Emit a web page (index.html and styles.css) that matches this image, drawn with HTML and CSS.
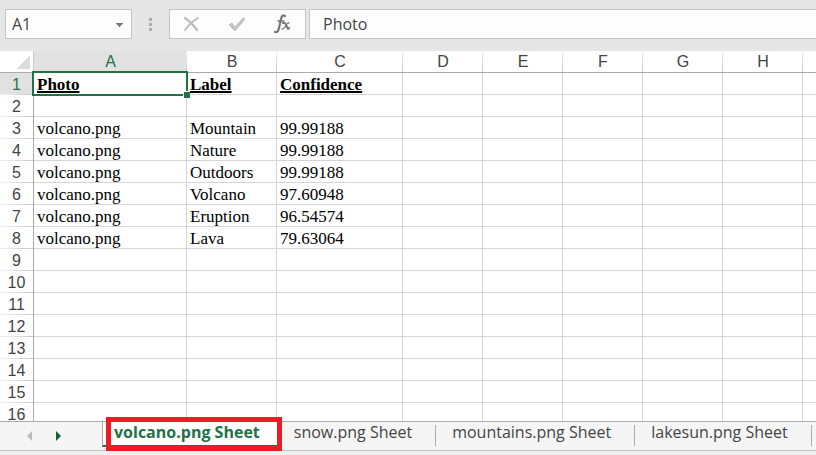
FILE: index.html
```html
<!DOCTYPE html>
<html lang="en">
<head>
<meta charset="utf-8">
<title>Photo labels</title>
<link rel="stylesheet" href="styles.css">
</head>
<body>
<header class="formula-bar">
  <select class="name-box" aria-label="Name box"><option>A1</option></select>
  <span class="grip"><i></i><i></i><i></i></span>
  <div class="actions">
    <button type="button" aria-label="Cancel"><svg width="18" height="18" viewBox="0 0 18 18" fill="none" stroke="#bdbdbd" stroke-linecap="round"><path d="M3 3Q9 7 15 15" stroke-width="2.4"/><path d="M16 3Q9 7 3 15" stroke-width="2"/></svg></button>
    <button type="button" aria-label="Enter"><svg width="18" height="18" viewBox="0 0 18 18"><path d="M1 10L4 8L7 12L15 3L17 4L7 16Z" fill="#c3c3c3" stroke="#c3c3c3"/></svg></button>
    <button type="button" aria-label="Insert function"><svg width="18" height="20" viewBox="0 0 18 20" fill="none" stroke="#777" stroke-linecap="round"><path d="M11 2Q8 0 7 5L5 14Q4 19 1 18" stroke-width="2.2"/><path d="M4 7H10" stroke-width="1.3"/><path d="M9 9Q11 8 12 11L13 13Q14 16 15 14" stroke-width="2"/><path d="M15 9Q14 8 12 11.500T8 15" stroke-width="1.3"/></svg></button>
  </div>
  <input class="formula" type="text" value="Photo" aria-label="Formula">
</header>
<main class="sheet">
  <table>
    <colgroup><col class="col-index"><col class="col-a"><col class="col-b"><col class="col-c"><col class="col-std"><col class="col-std"><col class="col-std"><col class="col-std"><col class="col-std"><col></colgroup>
    <thead>
      <tr><th class="corner"></th><th class="current">A</th><th>B</th><th>C</th><th>D</th><th>E</th><th>F</th><th>G</th><th>H</th><th></th></tr>
    </thead>
    <tbody>
      <tr class="titles"><th class="current">1</th><td class="selected">Photo</td><td>Label</td><td>Confidence</td><td></td><td></td><td></td><td></td><td></td><td></td></tr>
      <tr><th>2</th><td></td><td></td><td></td><td></td><td></td><td></td><td></td><td></td><td></td></tr>
      <tr><th>3</th><td>volcano.png</td><td>Mountain</td><td>99.99188</td><td></td><td></td><td></td><td></td><td></td><td></td></tr>
      <tr><th>4</th><td>volcano.png</td><td>Nature</td><td>99.99188</td><td></td><td></td><td></td><td></td><td></td><td></td></tr>
      <tr><th>5</th><td>volcano.png</td><td>Outdoors</td><td>99.99188</td><td></td><td></td><td></td><td></td><td></td><td></td></tr>
      <tr><th>6</th><td>volcano.png</td><td>Volcano</td><td>97.60948</td><td></td><td></td><td></td><td></td><td></td><td></td></tr>
      <tr><th>7</th><td>volcano.png</td><td>Eruption</td><td>96.54574</td><td></td><td></td><td></td><td></td><td></td><td></td></tr>
      <tr><th>8</th><td>volcano.png</td><td>Lava</td><td>79.63064</td><td></td><td></td><td></td><td></td><td></td><td></td></tr>
      <tr><th>9</th><td></td><td></td><td></td><td></td><td></td><td></td><td></td><td></td><td></td></tr>
      <tr><th>10</th><td></td><td></td><td></td><td></td><td></td><td></td><td></td><td></td><td></td></tr>
      <tr><th>11</th><td></td><td></td><td></td><td></td><td></td><td></td><td></td><td></td><td></td></tr>
      <tr><th>12</th><td></td><td></td><td></td><td></td><td></td><td></td><td></td><td></td><td></td></tr>
      <tr><th>13</th><td></td><td></td><td></td><td></td><td></td><td></td><td></td><td></td><td></td></tr>
      <tr><th>14</th><td></td><td></td><td></td><td></td><td></td><td></td><td></td><td></td><td></td></tr>
      <tr><th>15</th><td></td><td></td><td></td><td></td><td></td><td></td><td></td><td></td><td></td></tr>
      <tr><th>16</th><td></td><td></td><td></td><td></td><td></td><td></td><td></td><td></td><td></td></tr>
    </tbody>
  </table>
</main>
<nav class="tab-bar" aria-label="Sheets">
  <div class="scrollers">
    <button type="button" aria-label="Previous sheet"><svg width="6" height="10" viewBox="0 0 6 10"><path d="M5 0V10L0 5Z" fill="#bdbdbd"/></svg></button>
    <button type="button" aria-label="Next sheet"><svg width="6" height="10" viewBox="0 0 6 10"><path d="M0 0V10L5 5Z" fill="#0b6131"/></svg></button>
  </div>
  <button type="button" class="tab active">volcano.png Sheet</button>
  <button type="button" class="tab">snow.png Sheet</button>
  <button type="button" class="tab">mountains.png Sheet</button>
  <button type="button" class="tab">lakesun.png Sheet</button>
</nav>
<footer class="status"></footer>
</body>
</html>
```
FILE: styles.css
```css
* { box-sizing: border-box; }
body {
  margin: 0;
  height: 100vh;
  display: flex;
  flex-direction: column;
  overflow: hidden;
  background: #fff;
  color: #444;
  font-family: "Open Sans", "Noto Sans", sans-serif;
}
button {
  padding: 0;
  border: 0;
  background: none;
  font: inherit;
  color: inherit;
}
svg { display: block; }

.formula-bar {
  flex: none;
  display: flex;
  align-items: center;
  height: 51px;
  padding: 9px 0 12px 5px;
  background: #e6e6e6;
}
.name-box, .actions, .formula {
  height: 30px;
  border: 1px solid #c6c6c6;
  border-radius: 0;
  background-color: #fdfdfd;
  color: #444;
}
.name-box {
  width: 127px;
  padding: 0 6px;
  appearance: none;
  font: 16px "Open Sans", sans-serif;
  background-image: linear-gradient(to bottom left, #777 50%, transparent 50%), linear-gradient(to bottom right, #777 50%, transparent 50%);
  background-size: 4px 4px;
  background-position: right 11px top 13px, right 7px top 13px;
  background-repeat: no-repeat;
}
.grip {
  display: grid;
  gap: 2px;
  margin: 0 17px;
}
.grip i {
  width: 3px;
  height: 3px;
  background: #ababab;
}
.actions {
  display: flex;
  width: 137px;
  padding: 0 12px;
  gap: 28px;
  align-items: center;
}
.formula {
  flex: 1;
  min-width: 0;
  margin-left: 3px;
  padding: 0 13px;
  border-right: 0;
  font: 16px "Open Sans", sans-serif;
}

.sheet {
  flex: 1;
  min-height: 0;
  overflow: hidden;
}
table {
  width: 100%;
  table-layout: fixed;
  border-collapse: separate;
  border-spacing: 0;
}
.col-index { width: 34px; }
.col-a { width: 153px; }
.col-b { width: 90px; }
.col-c { width: 126px; }
.col-std { width: 80px; }
tr { height: 22px; }
th, td {
  height: 22px;
  padding: 0;
  white-space: nowrap;
}
th {
  font: 16px/21px "Liberation Sans", Arial, sans-serif;
  color: #444;
}
thead th {
  border-bottom: 1px solid #ababab;
  background: linear-gradient(#f4f4f4, #c6c6c6) right / 1px 100% no-repeat;
}
thead .corner {
  background: linear-gradient(to bottom right, transparent 50%, #dcdcdc 50%) right 3px bottom 3px / 14px 14px no-repeat;
  border-right: 1px solid #c6c6c6;
}
tbody th {
  border-right: 1px solid #ababab;
  background: linear-gradient(to right, #f4f4f4, #c6c6c6) bottom / 100% 1px no-repeat;
}
thead .current, tbody .current {
  color: #217346;
  background-color: #e1e1e1;
}
td {
  padding: 2px 3px 0;
  border-right: 1px solid #d4d4d4;
  border-bottom: 1px solid #d4d4d4;
  font-family: "Liberation Serif", "Times New Roman", serif;
  font-size: 17px;
  line-height: 19px;
  color: #000;
}
td:last-child { border-right: 0; }
thead th:last-child { background: none; }
.titles td {
  font-weight: bold;
  text-decoration: underline 2px;
  text-underline-offset: 1px;
}
.selected { position: relative; }
.selected::before {
  content: "";
  position: absolute;
  inset: -2px -2px -2px -2px;
  border: 2px solid #217346;
}
.selected::after {
  content: "";
  position: absolute;
  right: -4px;
  bottom: -4px;
  width: 6px;
  height: 6px;
  border: solid #fff;
  border-width: 1px 0 0 1px;
  background: #217346;
}

.tab-bar {
  flex: none;
  display: flex;
  height: 30px;
  border-top: 1px solid #ababab;
  border-bottom: 1px solid #c0c0c0;
  background: #f5f5f5;
}
.scrollers {
  flex: none;
  display: flex;
  align-items: center;
  gap: 23px;
  width: 102px;
  padding-left: 27px;
}
.tab {
  position: relative;
  flex: none;
  height: 25px;
  padding: 0 24px 4px 16px;
  font-size: 16px;
  line-height: 21px;
}
.tab:not(.active)::after {
  content: "";
  position: absolute;
  right: 0;
  top: 3px;
  height: 21px;
  border-right: 1px solid #ababab;
}
.active {
  padding: 0 18px 2px 11px;
  border-left: 1px solid #ababab;
  border-bottom: 2px solid #217346;
  background: #fff;
  color: #217346;
  font-weight: bold;
}
.active::before {
  content: "";
  position: absolute;
  inset: -5px -4px -6px 3px;
  border: 5px solid #ed1c24;
}
.status {
  flex: none;
  height: 4px;
  background: #f1f0f0;
}
```
